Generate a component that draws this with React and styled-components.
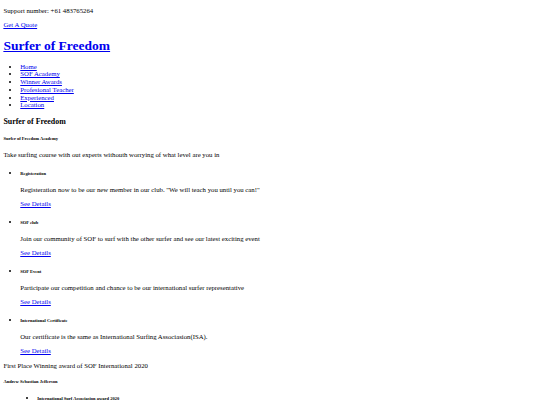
import React from 'react';
import styled, { createGlobalStyle } from 'styled-components';

// the reference is a plain, unstyled page shot at 1280 wide and shrunk to 540,
// so every default size is taken at 0.421875 of the browser's own
const GlobalStyle = createGlobalStyle`
	body {
		margin: 0;
		padding: 0 3.375px;
		font-family: "Liberation Serif", "Times New Roman", serif;
		font-size: 6.75px;
		line-height: 7.76px;
		color: #000;
		background: #fff;
	}
	a {
		color: #0000ee;
	}
`;

const Support = styled.p`
	margin: 6.75px 0;
`;

const Brand = styled.h1`
	font-size: 13.5px;
	line-height: 15.52px;
	margin: 9.05px 0;
`;

const NavList = styled.ul`
	margin: 6.75px 0;
	padding-left: 16.875px;
	list-style: disc;
`;

const SectionTitle = styled.h3`
	font-size: 7.9px;
	line-height: 9.08px;
	margin: 7.9px 0;
`;

const SmallTitle = styled.h6`
	font-size: 4.52px;
	line-height: 5.2px;
	margin: 9.8px 0;
`;

const Text = styled.p`
	margin: 6.75px 0;
`;

const CourseList = styled.ul`
	margin: 6.75px 0;
	padding-left: ${(p) => (p.$deep ? '33.75px' : '16.875px')};
	list-style: disc;
`;

const navItems = ['Home', 'SOF Academy', 'Winner Awards', 'Profesional Teacher', 'Experienced', 'Location'];

const courses = [
	{
		title: 'Registeration',
		text: 'Registeration now to be our new member in our club. "We will teach you until you can!"',
	},
	{
		title: 'SOF club',
		text: 'Join our community of SOF to surf with the other surfer and see our latest exciting event',
	},
	{
		title: 'SOF Event',
		text: 'Participate our competition and chance to be our international surfer representative',
	},
	{
		title: 'International Certificate',
		text: 'Our certificate is the same as International Surfing Associasion(ISA).',
	},
];

export default function App() {
	return (
		<>
			<GlobalStyle />
			<header>
				<Support>Support number: +61 483765264</Support>
				<Support>
					<a href="#quote">Get A Quote</a>
				</Support>
				<Brand>
					<a href="#home">Surfer of Freedom</a>
				</Brand>
				<nav>
					<NavList>
						{navItems.map((item) => (
							<li key={item}>
								<a href={'#' + item.toLowerCase().replace(/ /g, '-')}>{item}</a>
							</li>
						))}
					</NavList>
				</nav>
			</header>
			<main>
				<SectionTitle>Surfer of Freedom</SectionTitle>
				<SmallTitle>Surfer of Freedom Academy</SmallTitle>
				<Text>Take surfing course with out experts withouth worrying of what level are you in</Text>
				<CourseList>
					{courses.map((c) => (
						<li key={c.title}>
							<SmallTitle>{c.title}</SmallTitle>
							<Text>{c.text}</Text>
							<Text>
								<a href="#details">See Details</a>
							</Text>
						</li>
					))}
				</CourseList>
				<Text>First Place Winning award of SOF International 2020</Text>
				<SmallTitle>Andrew Sebastian Jefferson</SmallTitle>
				<CourseList $deep>
					<li>
						<SmallTitle>International Surf Associasion award 2020</SmallTitle>
					</li>
				</CourseList>
			</main>
		</>
	);
}
